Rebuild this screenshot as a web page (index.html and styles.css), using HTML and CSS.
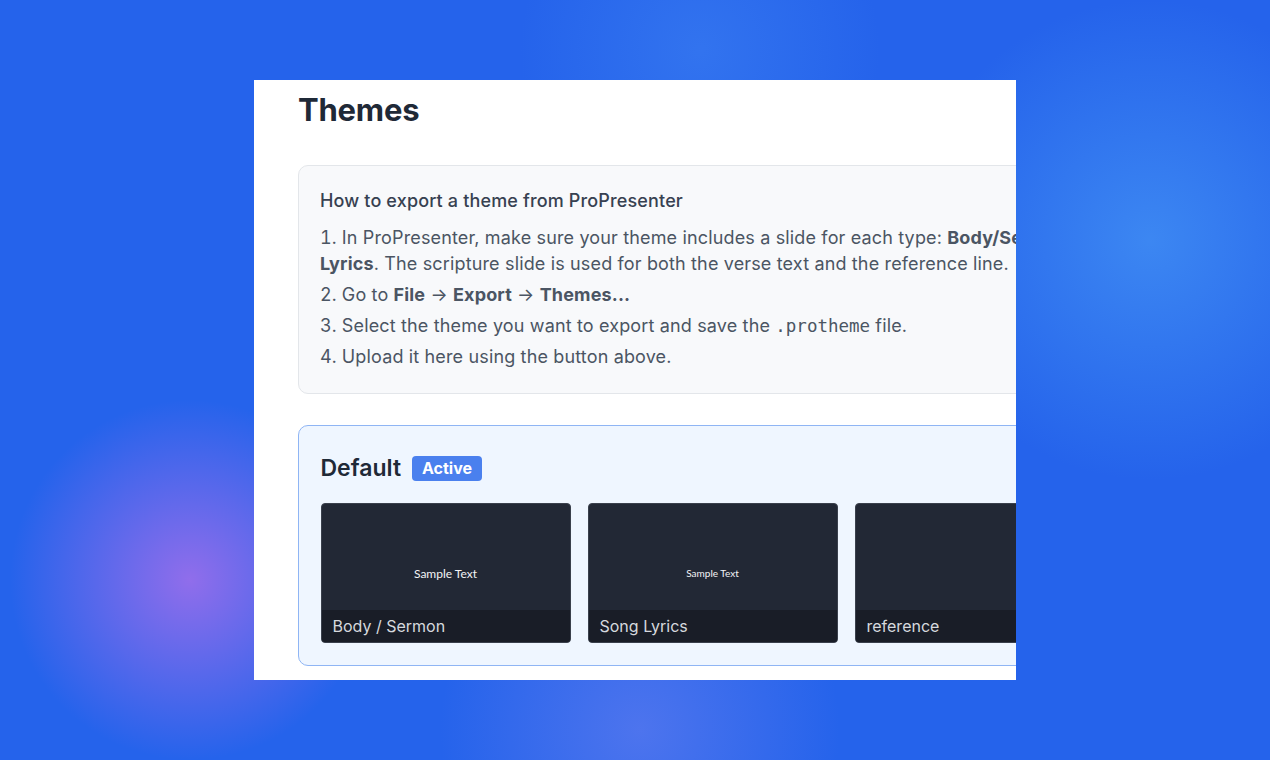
FILE: index.html
```html
<!DOCTYPE html>
<html lang="en">
<head>
    <meta charset="UTF-8">
    <meta name="viewport" content="width=device-width, initial-scale=1.0">
    <title>Themes</title>
    <link rel="stylesheet" href="styles.css">
</head>
<body>
    <div class="stage">
        <div class="window">
            <div class="page">
                <h1>Themes</h1>

                <!-- Export instructions -->
                <div class="help-box">
                    <h3>How to export a theme from ProPresenter</h3>
                    <ol>
                        <li>In ProPresenter, make sure your theme includes a slide for each type: <strong>Body/Sermon</strong>, <strong>Scripture</strong>, <strong>Song Lyrics</strong>. The scripture slide is used for both the verse text and the reference line.</li>
                        <li>Go to <strong>File</strong> &rarr; <strong>Export</strong> &rarr; <strong>Themes...</strong></li>
                        <li>Select the theme you want to export and save the <code>.protheme</code> file.</li>
                        <li>Upload it here using the button above.</li>
                    </ol>
                </div>

                <!-- Theme card -->
                <div class="theme-card active">
                    <div class="theme-header">
                        <h2>Default</h2>
                        <span class="badge">Active</span>
                    </div>
                    <div class="slides">
                        <div class="slide">
                            <div class="slide-preview"><span class="sample">Sample Text</span></div>
                            <div class="slide-label">Body / Sermon</div>
                        </div>
                        <div class="slide">
                            <div class="slide-preview"><span class="sample small">Sample Text</span></div>
                            <div class="slide-label">Song Lyrics</div>
                        </div>
                        <div class="slide">
                            <div class="slide-preview"></div>
                            <div class="slide-label">reference</div>
                        </div>
                    </div>
                </div>
            </div>
        </div>
    </div>
</body>
</html>
```

FILE: styles.css
```css
/* Reset and base styles */
* {
    box-sizing: border-box;
    margin: 0;
    padding: 0;
}

body {
    font-family: Inter, "Noto Sans", sans-serif;
    width: 1270px;
    height: 760px;
    overflow: hidden;
}

/* Blue backdrop with soft glows */
.stage {
    width: 1270px;
    height: 760px;
    padding-top: 80px;
    padding-left: 254px;
    background:
        radial-gradient(circle at 700px 50px, rgba(70, 140, 245, 0.4) 0, rgba(70, 140, 245, 0) 180px),
        radial-gradient(circle at 1150px 240px, rgba(70, 150, 245, 0.7) 0, rgba(70, 150, 245, 0) 240px),
        radial-gradient(circle at 190px 580px, rgba(150, 110, 235, 0.95) 0, rgba(150, 110, 235, 0) 180px),
        radial-gradient(circle at 640px 730px, rgba(110, 130, 240, 0.55) 0, rgba(110, 130, 240, 0) 200px),
        #2563eb;
}

.window {
    width: 762px;
    height: 600px;
    background: #fff;
    overflow: hidden;
}

.page {
    width: 1100px;
    padding: 10px 0 0 44px;
}

/* Header */
h1 {
    font-size: 31px;
    font-weight: 700;
    color: #1f2937;
    line-height: 40px;
    letter-spacing: -0.2px;
    margin-bottom: 35px;
}

/* Help box */
.help-box {
    width: 965px;
    background: #f8f9fb;
    border: 1px solid #e3e6ea;
    border-radius: 10px;
    padding: 22px 21px 23px;
    color: #4b5563;
    margin-bottom: 31px;
    letter-spacing: 0.15px;
}

.help-box h3 {
    font-size: 18px;
    font-weight: 500;
    color: #374151;
    line-height: 26px;
    margin-bottom: 11px;
}

.help-box ol {
    list-style-position: inside;
    font-size: 18px;
    line-height: 26px;
}

.help-box li {
    margin-bottom: 5px;
}

.help-box li:last-child {
    margin-bottom: 0;
}

.help-box strong {
    font-weight: 700;
    color: #4b5563;
}

.help-box code {
    font-family: "DejaVu Sans Mono", "Liberation Mono", monospace;
    font-size: 17.5px;
    letter-spacing: 0;
    color: #4b5563;
}

/* Theme card */
.theme-card {
    width: 965px;
    background: #eff6ff;
    border: 1.5px solid #8fb5f4;
    border-radius: 10px;
    padding: 27px 21px 22px 21.5px;
}

.theme-header {
    display: flex;
    align-items: center;
    gap: 11px;
    margin-bottom: 20px;
}

.theme-header h2 {
    font-size: 23px;
    font-weight: 600;
    color: #1f2937;
    line-height: 30px;
}

.badge {
    background: #4a80ee;
    color: #fff;
    font-size: 16px;
    font-weight: 700;
    line-height: 25px;
    padding: 0 10px;
    border-radius: 4px;
}

.slides {
    display: flex;
    gap: 17px;
}

.slide {
    width: 250px;
    height: 140px;
    background: #222835;
    border: 1px solid #3a404c;
    border-radius: 4px;
    overflow: hidden;
    display: flex;
    flex-direction: column;
}

.slide-preview {
    flex: 1;
    display: flex;
    align-items: center;
    justify-content: center;
    padding-top: 32px;
}

.sample {
    font-family: Lato, sans-serif;
    font-size: 12px;
    color: #f3f4f6;
}

.sample.small {
    font-size: 10px;
}

.slide-label {
    height: 32px;
    background: #191d27;
    color: #d6d9de;
    font-size: 16px;
    line-height: 32px;
    padding-left: 11px;
}
```
